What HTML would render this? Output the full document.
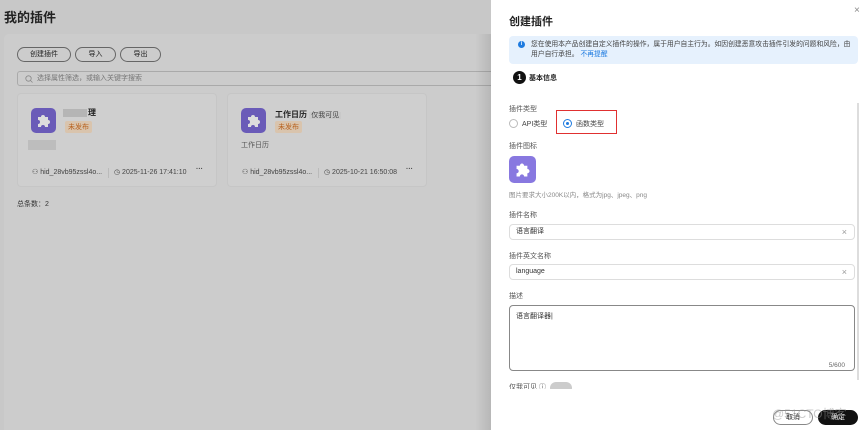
<!DOCTYPE html>
<html><head><meta charset="utf-8"><style>
*{box-sizing:border-box;margin:0;padding:0}
html,body{width:865px;height:430px;overflow:hidden}
body{position:relative;background:#c8c8c8;font-family:"Liberation Sans","Noto Sans CJK SC",sans-serif;color:#222}
.a{position:absolute}
.btn{position:absolute;height:15px;border:1px solid #666;border-radius:8px;font-size:7px;line-height:13px;text-align:center;color:#222}
.card{position:absolute;width:200px;height:94px;background:#cfcfcf;border:1px solid #c6c6c6;border-radius:4px}
.ic{position:absolute;width:25px;height:25px;border-radius:5px;background:#6a5bb8}
.tag{position:absolute;font-size:7px;background:#d9c4ad;color:#b8621f;padding:1px 3px;border-radius:2px}
.ft{position:absolute;top:74px;font-size:7px;color:#444;white-space:nowrap}
.lbl{position:absolute;left:509px;font-size:7px;color:#555}
.inp{position:absolute;left:509px;width:346px;height:16px;border:1px solid #ddd;border-radius:4px;font-size:7px;line-height:14px;padding-left:6px;color:#333}
.x{position:absolute;right:7px;top:0;color:#999;font-size:9px}
</style></head><body>
<div class="a" style="left:4px;top:7px;font-size:13px;font-weight:bold">我的插件</div>
<div class="a" style="left:4px;top:34px;width:487px;height:396px;background:#cccccc;border-radius:5px 0 0 0"></div>
<div class="btn" style="left:17px;top:47px;width:54px">创建插件</div>
<div class="btn" style="left:75px;top:47px;width:41px">导入</div>
<div class="btn" style="left:120px;top:47px;width:41px">导出</div>
<div class="a" style="left:17px;top:71px;width:480px;height:15px;border:1px solid #aaa;border-radius:3px;font-size:7px;color:#777;line-height:13px;padding-left:19px">选择属性筛选，或输入关键字搜索
<svg class="a" style="left:7px;top:3px" width="8" height="8" viewBox="0 0 8 8"><circle cx="3.5" cy="3.5" r="2.7" fill="none" stroke="#888" stroke-width=".8"/><path d="M5.5 5.5L7.5 7.5" stroke="#888" stroke-width=".8"/></svg></div>

<div class="card" style="left:17px;top:93px">
<div class="ic" style="left:13px;top:14px"><svg width="25" height="25" viewBox="0 0 25 25"><path d="M7 9h3a2 2 0 1 1 4 0h3v3a2 2 0 1 1 0 4v3h-3a2 2 0 1 0-4 0H7v-3a2 2 0 1 0 0-4z" fill="#ddd"/></svg></div>
<div class="a" style="left:45px;top:15px;width:24px;height:8px;background:#b5b5b5"></div>
<div class="a" style="left:70px;top:13px;font-size:8px;font-weight:bold">理</div>
<div class="tag" style="left:47px;top:27px">未发布</div>
<div class="a" style="left:10px;top:46px;width:28px;height:10px;background:#bdbdbd"></div>
<div class="ft" style="left:14px">⚇ hid_28vb95zssl4o...</div>
<div class="a" style="left:90px;top:74px;width:1px;height:10px;background:#bbb"></div>
<div class="ft" style="left:96px">◷ 2025-11-26 17:41:10</div>
<div class="ft" style="left:178px;font-weight:bold;top:72px">···</div>
</div>
<div class="card" style="left:227px;top:93px">
<div class="ic" style="left:13px;top:14px"><svg width="25" height="25" viewBox="0 0 25 25"><path d="M7 9h3a2 2 0 1 1 4 0h3v3a2 2 0 1 1 0 4v3h-3a2 2 0 1 0-4 0H7v-3a2 2 0 1 0 0-4z" fill="#ddd"/></svg></div>
<div class="a" style="left:47px;top:15px;font-size:8px;font-weight:bold">工作日历 <span style="font-weight:normal;font-size:7px;color:#444;background:#c9c9c9;padding:0 2px">仅我可见</span></div>
<div class="tag" style="left:47px;top:27px">未发布</div>
<div class="a" style="left:13px;top:46px;font-size:7px;color:#555">工作日历</div>
<div class="ft" style="left:14px">⚇ hid_28vb95zssl4o...</div>
<div class="a" style="left:90px;top:74px;width:1px;height:10px;background:#bbb"></div>
<div class="ft" style="left:96px">◷ 2025-10-21 16:50:08</div>
<div class="ft" style="left:178px;font-weight:bold;top:72px">···</div>
</div>
<div class="a" style="left:17px;top:199px;font-size:7px;color:#333">总条数：2</div>
<div class="a" style="left:475px;top:34px;width:16px;height:396px;background:linear-gradient(to right,rgba(0,0,0,0),rgba(0,0,0,.1))"></div>

<div class="a" style="left:491px;top:0;width:374px;height:430px;background:#fff"></div>
<div class="a" style="left:509px;top:13px;font-size:11px;font-weight:bold">创建插件</div>
<div class="a" style="left:854px;top:5px;font-size:10px;color:#888">×</div>
<div class="a" style="left:509px;top:36px;width:349px;height:28px;background:#e6f1fd;border-radius:4px"></div>
<div class="a" style="left:518px;top:41px;width:7px;height:7px;border-radius:50%;background:#1e7be0;color:#fff;font-size:5px;text-align:center;line-height:7px;font-weight:bold">i</div>
<div class="a" style="left:531px;top:40px;width:325px;font-size:6.8px;line-height:10px;color:#444">您在使用本产品创建自定义插件的操作，属于用户自主行为。如因创建恶意攻击插件引发的问题和风险，由用户自行承担。 <span style="color:#1e7be0">不再提醒</span></div>
<div class="a" style="left:513px;top:71px;width:13px;height:13px;border-radius:50%;background:#111;color:#fff;font-size:8px;text-align:center;line-height:13px;font-weight:bold">1</div>
<div class="a" style="left:529px;top:73px;font-size:7px;font-weight:bold">基本信息</div>
<div class="a" style="left:857px;top:103px;width:2px;height:277px;background:#ddd"></div>
<div class="lbl" style="top:104px">插件类型</div>
<div class="a" style="left:509px;top:119px;width:9px;height:9px;border:1px solid #bbb;border-radius:50%"></div>
<div class="a" style="left:522px;top:119px;font-size:7px;color:#444">API类型</div>
<div class="a" style="left:556px;top:110px;width:61px;height:24px;border:1.5px solid #e03030"></div>
<div class="a" style="left:563px;top:119px;width:9px;height:9px;border:1px solid #1e7be0;border-radius:50%"><div style="margin:2px;width:3px;height:3px;border-radius:50%;background:#1e7be0"></div></div>
<div class="a" style="left:576px;top:119px;font-size:7px;color:#444">函数类型</div>
<div class="lbl" style="top:141px">插件图标</div>
<div class="a" style="left:509px;top:156px;width:27px;height:27px;border-radius:5px;background:#8878e0"><svg width="27" height="27" viewBox="0 0 25 25"><path d="M7 9h3a2 2 0 1 1 4 0h3v3a2 2 0 1 1 0 4v3h-3a2 2 0 1 0-4 0H7v-3a2 2 0 1 0 0-4z" fill="#fff"/></svg></div>
<div class="lbl" style="top:189px;color:#888;font-size:6.5px">图片要求大小200K以内，格式为jpg、jpeg、png</div>
<div class="lbl" style="top:210px">插件名称</div>
<div class="inp" style="top:224px">语言翻译<span class="x">×</span></div>
<div class="lbl" style="top:251px">插件英文名称</div>
<div class="inp" style="top:264px">language<span class="x">×</span></div>
<div class="lbl" style="top:291px">描述</div>
<div class="a" style="left:509px;top:305px;width:346px;height:66px;border:1px solid #888;border-radius:4px;font-size:7px;padding:5px 6px;color:#333">语言翻译器|<span class="a" style="right:9px;bottom:1px;font-size:6.5px;color:#666">5/600</span></div>
<div class="a" style="left:491px;top:381px;width:374px;height:8px;overflow:hidden"><span class="a" style="left:18px;top:1px;font-size:7px;color:#555">仅我可见 ⓘ</span><div class="a" style="left:59px;top:1px;width:22px;height:12px;border-radius:6px;background:#ccc"></div></div>
<div class="a" style="left:773px;top:410px;width:40px;height:15px;border:1px solid #888;border-radius:8px;font-size:7px;text-align:center;line-height:13px">取消</div>
<div class="a" style="left:818px;top:410px;width:40px;height:15px;background:#111;border-radius:8px;font-size:7px;text-align:center;line-height:15px;color:#fff">确定</div>
<div class="a" style="left:772px;top:405px;font-size:12px;color:rgba(150,150,150,.5)">@51CTO博客</div>
</body></html>
